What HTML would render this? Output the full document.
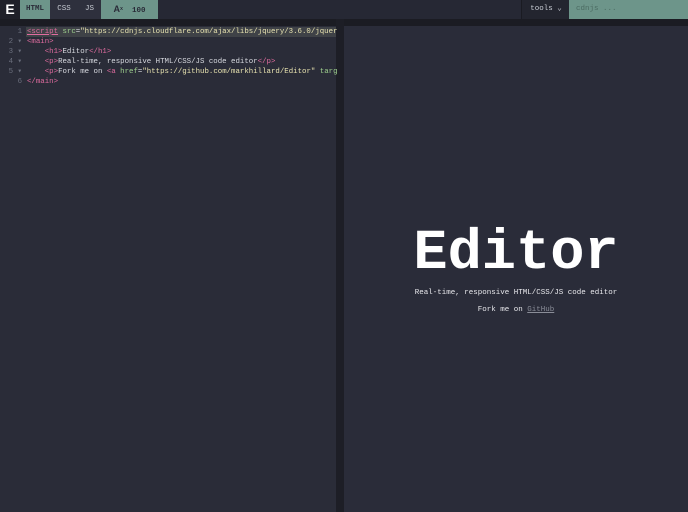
<!DOCTYPE html><html><head><style>
body{margin:0;width:688px;height:512px;background:#2a2c39;font-family:"Liberation Mono",monospace;overflow:hidden;position:relative}
.top{position:absolute;left:0;top:0;width:688px;height:19px;background:#262834}
.strip{position:absolute;left:0;top:19px;width:688px;height:7px;background:#1b1c23}
.tab{position:absolute;top:0;height:19px;line-height:19px;font-size:7.5px;color:#c8ccd4;text-align:center}
.ed{position:absolute;left:0;top:26px;width:336px;height:486px;background:#2a2c38}
.div{position:absolute;left:336px;top:19px;width:8px;height:493px;background:#1d1e26}
.code{position:absolute;left:0;top:27px;font-size:7.4px;line-height:10px;color:#d8dae0;white-space:pre}
.ln{display:inline-block;width:22px;color:#6b6f7d;text-align:right;padding-right:5px}
.t{color:#e06c9f}.a{color:#9fd18e}.s{color:#e8e3b0}
</style></head><body>
<div class="top"></div>
<div class="tab" style="left:0;width:20px;background:#1f2029;color:#fff;font-weight:bold;font-size:14px;font-family:'Liberation Sans',sans-serif">E</div>
<div class="tab" style="left:20px;width:30px;background:#6d958a;color:#2a2c38;font-weight:bold">HTML</div>
<div class="tab" style="left:50px;width:28px;background:#2e303d">CSS</div>
<div class="tab" style="left:78px;width:23px;background:#2e303d">JS</div>
<div class="tab" style="left:101px;width:57px;background:#6d958a;color:#2a2c38;font-weight:bold"><span style="font-family:'Liberation Sans';font-size:9px">A</span><span style="font-size:5px;vertical-align:top">x</span>&nbsp; 100</div>
<div class="tab" style="left:521px;width:48px;background:#23252f;border-left:1px solid #1a1b22">tools ⌄</div>
<div class="tab" style="left:569px;width:119px;background:#6d958a;color:#4b6b62;text-align:left;padding-left:7px;box-sizing:border-box">cdnjs ...</div>
<div class="strip"></div>
<div class="ed"></div>
<div style="position:absolute;left:26px;top:27px;width:310px;height:10px;background:#3f4247"></div>
<div class="div"></div>
<div class="code"><span class="ln">1</span><span class="t" style="text-decoration:underline">&lt;script</span> <span class="a">src</span>=<span class="s">"https://cdnjs.cloudflare.com/ajax/libs/jquery/3.6.0/jquer</span>
<span class="ln">2 ▾</span><span class="t">&lt;main&gt;</span>
<span class="ln">3 ▾</span>    <span class="t">&lt;h1&gt;</span>Editor<span class="t">&lt;/h1&gt;</span>
<span class="ln">4 ▾</span>    <span class="t">&lt;p&gt;</span>Real-time, responsive HTML/CSS/JS code editor<span class="t">&lt;/p&gt;</span>
<span class="ln">5 ▾</span>    <span class="t">&lt;p&gt;</span>Fork me on <span class="t">&lt;a</span> <span class="a">href</span>=<span class="s">"https://github.com/markhillard/Editor"</span> <span class="a">targ</span>
<span class="ln">6</span><span class="t">&lt;/main&gt;</span></div>
<div style="position:absolute;left:344px;width:344px;top:222px;text-align:center;color:#fff;font-weight:bold;font-size:57px;line-height:64px">Editor</div>
<div style="position:absolute;left:344px;width:344px;top:289px;text-align:center;color:#e8e8ec;font-size:7.5px">Real-time, responsive HTML/CSS/JS code editor</div>
<div style="position:absolute;left:344px;width:344px;top:306px;text-align:center;color:#e8e8ec;font-size:7.5px">Fork me on <span style="color:#8a8d98;text-decoration:underline">GitHub</span></div>
</body></html>
